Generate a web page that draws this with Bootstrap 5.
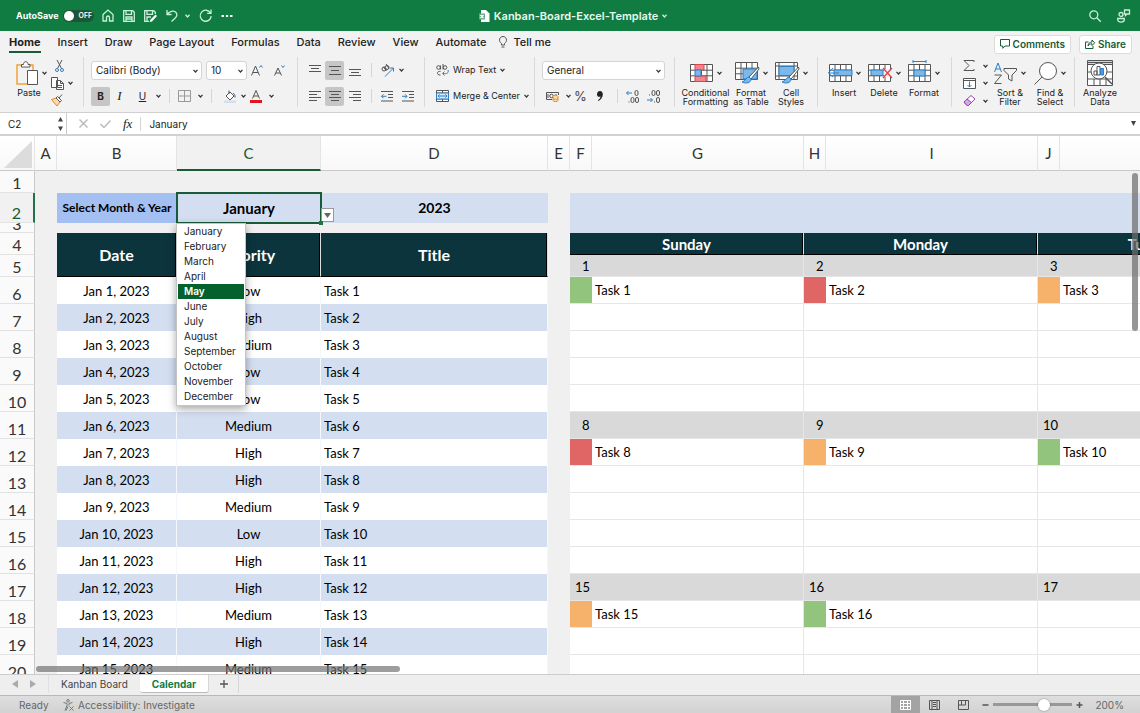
<!DOCTYPE html>
<html lang="en">
<head>
<meta charset="utf-8">
<meta name="viewport" content="width=device-width, initial-scale=1">
<title>Kanban-Board-Excel-Template</title>
<link href="https://cdn.jsdelivr.net/npm/bootstrap@5.3.0/dist/css/bootstrap.min.css" rel="stylesheet">
<style>
  :root { --xl-green: #107c41; --xl-dark: #0c343d; --xl-band: #d3def1; --xl-canvas: #f0f0f0; }
  body { font-family: Inter, "Liberation Sans", sans-serif; font-size: 9px; line-height: 10px; color: #222; background: #f2f2f2; }
  svg { display: block; flex: none; fill: none; stroke: #555; stroke-width: 1; overflow: visible; }
  button { font: inherit; color: inherit; }
  .plain { border: 0; padding: 0; background: none; display: flex; align-items: center; justify-content: center; gap: 4px; }
  .plain.wide { gap: 7px; }
  .chev { width: 5px; height: 4px; stroke: #333; stroke-width: 1.2; }

  .titlebar { height: 31px; background: var(--xl-green); color: #fff; padding: 0 10px 0 16px; }
  .titlebar svg { stroke: #c9f0d8; stroke-width: 1.3; }
  .titlebar svg.chev { stroke: #c9f0d8; }
  .side { flex: 1 1 0; }
  .quick { gap: 9px; }
  .autosave { background: #1d5635; border-radius: 6px; width: 31px; height: 12px; font-size: 7px; font-weight: 600; }
  .autosave input { appearance: none; width: 10px; height: 10px; border-radius: 5px; background: #fff; margin: 1px; }
  .doc-title { font-size: 11px; font-weight: 600; color: #e8f8ee; }

  .tabs-row { height: 26px; padding: 0 8px 0 9px; font-size: 11px; line-height: 14px; font-weight: 500; }
  .tabs-row nav { gap: 17px; }
  .tabs-row nav a { color: #222; text-decoration: none; padding: 0 0 2px; border-bottom: 2px solid transparent; }
  .tabs-row nav a.active { font-weight: 700; border-color: #185c37; }
  .tell { display: flex; align-items: center; gap: 6px; margin-left: -4px; }
  .pill { background: #fff; border: 1px solid #dcdcdc; border-radius: 3px; height: 19px; padding: 0 5px; gap: 3px; color: #185c37; font-size: 10px; font-weight: 600; }
  .pill svg { stroke: #185c37; }

  .ribbon { height: 56px; border-bottom: 1px solid #d0d0d0; overflow: hidden; }
  .group { height: 50px; padding: 3px 0 0 7px; display: flex; border-right: 1px solid #d9d9d9; flex: none; }
  .tool-row { height: 20px; display: flex; align-items: center; }
  .tool-row.tight { gap: 1px; }
  .rows { display: flex; flex-direction: column; gap: 6px; }
  .stack3 { height: 46px; display: flex; flex-direction: column; justify-content: space-between; align-items: flex-start; }
  .sq { width: 19px; height: 19px; border-radius: 2px; }
  .sq.on { background: #c6c6c6; }
  .split { width: 1px; height: 14px; background: #d5d5d5; }
  .tight .split { margin: 0 8px 0 6px; }
  .pick { position: relative; display: block; }
  .pick select { appearance: none; width: 100%; height: 19px; border: 1px solid #d4d4d4; border-radius: 3px; background: #fff; padding: 0 4px; font-size: 10px; line-height: 14px; color: #222; display: block; }
  .pick svg { position: absolute; right: 4px; top: 8px; }
  .big { width: 36px; flex-direction: column; gap: 2px; white-space: nowrap; justify-content: flex-start; line-height: 9px; }
  .big .art { height: 26px; display: flex; align-items: center; gap: 4px; }
  .serif-i { font: italic 13px "Liberation Serif", serif; }

  .formula { height: 23px; background: #fff; border-bottom: 2px solid #d2d2d2; }
  .formula input { border: 0; background: none; font-size: 10px; color: #222; padding: 0; line-height: 14px; outline: 0; }
  .namebox { width: 67px; padding: 0 3px 0 8px; border-right: 1px solid #ccc; }

  .sheet { background: #fff; font-family: Lato, "Noto Sans", sans-serif; font-size: 13px; line-height: 16px; color: #000; }
  .sheet table { table-layout: fixed; width: 1273px; border-collapse: separate; border-spacing: 0; }
  .sheet th, .sheet td { padding: 0; overflow: hidden; white-space: nowrap; }
  .cols th { height: 35px; font-size: 15px; font-weight: 400; text-align: center; color: #333; border-right: 1px solid #e4e4e4; border-bottom: 1px solid #c9c9c9; background: linear-gradient(#fff, #f8f8f8); }
  .cols th.sel { background: #f1f1f1; color: #185c37; border-bottom: 2px solid #185c37; }
  .num { font-size: 16px; font-weight: 400; text-align: center; vertical-align: bottom; line-height: 18px; color: #333; background: #fafafa; border-right: 1px solid #c9c9c9; border-bottom: 1px solid #e2e2e2; }
  .num.sel { color: #185c37; background: #f1f1f1; border-right: 2px solid #217346; }
  .num div { height: 7px; display: flex; align-items: flex-end; justify-content: center; overflow: hidden; margin-bottom: 2px; line-height: 12px; }
  .canvas-bg { background: var(--xl-canvas); }
  .pale { background: var(--xl-band); }
  .sheet td.month { overflow: visible; position: relative; outline: 2px solid #185c37; outline-offset: -1px; z-index: 2; }
  .input-head { font-size: 14px; font-weight: 700; text-align: center; }
  .month { font-size: 15px; }
  .label-cell { background: #a4bff2; font-size: 12px; font-weight: 700; text-align: center; }
  .dark { background: var(--xl-dark); color: #fff; font-weight: 700; text-align: center; border-right: 1px solid #ddd; border-bottom: 1px solid #000; box-shadow: inset -1px 0 #000; }
  .dark.tall { font-size: 16px; }
  .dark.day { font-size: 15px; }
  .lst { text-align: center; border-right: 1px solid #f4f7fc; }
  .sheet td.task { text-align: left; padding-left: 3px; }
  .cal { border-bottom: 1px solid #e6e6e6; }
  .cal.edge { border-right: 1px solid #e6e6e6; }
  .sheet td.cal.txt { padding-left: 3px; }
  .date-row { background: #d9d9d9; }
  .sheet td.date-row.n { padding-left: 5px; }
  .sheet td.date-row.one { padding-left: 12px; }
  .green { background: #93c47d; } .red { background: #e06666; } .orange { background: #f6b26b; }
  .arrow-btn { position: absolute; left: 144px; bottom: 1px; width: 13px; height: 14px; background: #fff; border: 1px solid #999; padding: 0; }
  .handle { position: absolute; right: -2px; bottom: -2px; width: 4px; height: 4px; background: #217346; }
  .months { position: absolute; left: -1px; top: 30px; width: 70px; padding: 0 1px 1px; margin: 0; list-style: none; background: #fff; border: 1px solid #c4c4c4; box-shadow: 0 3px 8px rgba(0,0,0,.35); font: 400 10px/15px Inter, sans-serif; text-align: left; }
  .months button { border: 0; background: none; width: 100%; text-align: left; padding: 0 0 0 6px; display: block; color: #222; }
  .months button.on { background: #05612b; color: #fff; font-weight: 600; }
  .hbar { position: absolute; left: 36px; bottom: 2px; width: 364px; height: 6px; border-radius: 3px; background: rgba(110,110,110,.68); z-index: 4; }
  .vbar { position: absolute; right: 2px; top: 37px; width: 6px; height: 158px; border-radius: 3px; background: rgba(110,110,110,.72); z-index: 4; }

  .sheet-tabs { height: 21px; background: #eee; border-top: 1px solid #ccc; font-size: 10px; color: #444; }
  .sheet-tabs .tab-btn { height: 18px; padding: 0 12px; border-right: 1px solid #d6d6d6; }
  .sheet-tabs .tab-btn.on { background: #fff; color: #107c41; font-weight: 700; border-bottom: 1px solid #bbb; border-radius: 0 0 3px 3px; }
  .pager { width: 49px; height: 18px; gap: 12px; }
  .status { height: 18px; background: linear-gradient(#dedede, #d2d2d2); border-top: 1px solid #b9b9b9; font-size: 10px; color: #666; }
  .ready { width: 63px; padding-left: 19px; }
  .view { width: 29px; height: 18px; }
  .view.on { background: #a3a3a3; }
  .zoom { appearance: none; width: 79px; height: 12px; margin: 0; background: linear-gradient(#989898, #989898) center / 100% 3px no-repeat; }
  .zoom::-webkit-slider-thumb { appearance: none; width: 12px; height: 12px; border-radius: 6px; background: #fff; box-shadow: 0 0 2px rgba(0,0,0,.4); }
</style>
</head>
<body>
<svg width="0" height="0" class="position-absolute">
  <symbol id="chev" viewBox="0 0 5 4"><path d="M.5 .8 2.500 3 4.500 .8"/></symbol>
  <symbol id="grid" viewBox="0 0 23 18"><path fill="#fff" d="M.5.5h22v17H.5z"/><path d="M.5 6.200h22M.5 11.800h22M6 .5v17M11.500.5v17M17 .5v17"/></symbol>
</svg>
<div class="d-flex flex-column vh-100 overflow-hidden">

<header class="titlebar d-flex align-items-center flex-shrink-0">
  <div class="side d-flex align-items-center">
    <label for="autosave" class="fw-bold me-1">AutoSave</label>
    <div class="autosave d-flex align-items-center me-2"><input type="checkbox" id="autosave" role="switch"><span class="ms-1">OFF</span></div>
    <div class="quick d-flex align-items-center">
      <button class="plain" aria-label="Home"><svg width="12" height="13" viewBox="0 0 12 13"><path d="M1 5.500 6 1l5 4.500V12H7.500V8.500A1.500 1.500 0 0 0 4.500 8.500V12H1z"/></svg></button>
      <button class="plain" aria-label="Save"><svg width="12" height="12" viewBox="0 0 12 12"><path d="M.7.7h9l1.600 1.600v9H.7zM3 .7v3.600h5.500V.7M3 11.300V7h6v4.300M3 9h6"/></svg></button>
      <button class="plain" aria-label="Save as"><svg width="13" height="12" viewBox="0 0 13 12"><path d="M5 11.300H.7V.7h9l1.600 1.600V4M3 .7v3.600h5.500V.7M3 11V7h4"/><path fill="#fff" stroke="none" d="m11.500 4.500 1.500 1.500-5 5.500-2.300.5.600-2.200z"/></svg></button>
      <button class="plain wide" aria-label="Undo"><svg width="12" height="13" viewBox="0 0 12 13"><path d="M1 1v4.500h4.500M1 5.500C3 3 5 2 7.500 2.200c3.500.5 4.500 4 2 6.500L5.500 12.500"/></svg><svg class="chev"><use href="#chev"/></svg></button>
      <button class="plain" aria-label="Redo"><svg width="13" height="13" viewBox="0 0 13 13"><path d="M11.500 4A5.500 5.500 0 1 0 12.200 7M12 .5V4.300H8.200"/></svg></button>
      <button class="plain" aria-label="More"><svg width="12" height="4" viewBox="0 0 12 4"><path fill="#fff" stroke="none" d="M.5 1h2.500v2H.5zM4.800 1h2.400v2H4.800zM9 1h2.500v2H9z"/></svg></button>
    </div>
  </div>
  <div class="doc-title d-flex align-items-center gap-1">
    <svg width="11" height="12" viewBox="0 0 11 12"><path fill="#fff" stroke="none" d="M2 0h5l3.500 3.500V12H2z"/><path fill="#69aa85" stroke="none" d="M0 3.500h6v6H0z"/><path stroke="#fff" d="m1.500 5 3 3m0-3-3 3M8 5v4"/></svg>
    <span>Kanban-Board-Excel-Template</span><svg class="chev"><use href="#chev"/></svg>
  </div>
  <div class="side d-flex align-items-center justify-content-end gap-3">
    <button class="plain" aria-label="Search"><svg width="12" height="12" viewBox="0 0 12 12"><circle cx="4.800" cy="4.800" r="4"/><path d="m7.800 7.800 4 4"/></svg></button>
    <button class="plain" aria-label="Presence"><svg width="13" height="14" viewBox="0 0 13 14"><circle cx="4" cy="5.500" r="2"/><path d="M.7 9.500h6.600v1.300c0 3-6.600 3-6.600 0zM7.500 1h5v4H10L8.500 6.500V5h-1z"/></svg></button>
  </div>
</header>

<div class="tabs-row d-flex align-items-center flex-shrink-0">
  <nav class="d-flex align-items-center">
    <a href="#" class="active">Home</a><a href="#">Insert</a><a href="#">Draw</a><a href="#">Page Layout</a><a href="#">Formulas</a><a href="#">Data</a><a href="#">Review</a><a href="#">View</a><a href="#">Automate</a>
    <a href="#" class="tell"><svg width="8" height="12" viewBox="0 0 8 12"><path d="M2.500 9V7.500C-1 5 .5.5 4 .5S9 5 5.500 7.500V9zM2.500 11h3"/></svg>Tell me</a>
  </nav>
  <div class="ms-auto d-flex gap-2">
    <button class="plain pill"><svg width="10" height="10" viewBox="0 0 10 10"><path d="M.5.5h9v6.500H5L2.800 9.300V7H.5z"/></svg>Comments</button>
    <button class="plain pill"><svg width="10" height="10" viewBox="0 0 10 10"><path d="M3.500 3H.5v6.500h7.500V7M3 7c.3-3 2-4 4-4V1l2.700 2.800L7 6.500V4.800C5 4.800 4 5.500 3 7z"/></svg>Share</button>
  </div>
</div>

<div class="ribbon d-flex flex-shrink-0">
  <div class="group" style="width:84px">
    <button class="plain big ms-1"><span class="art ms-1"><svg width="22" height="25" viewBox="0 0 22 25"><path stroke="#f0a23e" stroke-width="1.500" d="M6 4H1v19h10M14 4h3v5"/><path fill="#fff" d="M5.500 6V3.500h2C7.500-.3 12-.3 12 3.500h2V6z"/><path fill="#fff" d="M11.500 9.500h10v14h-10z"/></svg><svg class="chev"><use href="#chev"/></svg></span>Paste</button>
    <div class="stack3 ms-1">
      <button class="plain px-1" aria-label="Cut"><svg width="9" height="12" viewBox="0 0 9 12"><path d="M2 0l4.500 8.500M7 0 2.500 8.500"/><g stroke="#2e7fc4"><circle cx="2" cy="10" r="1.500"/><circle cx="7" cy="10" r="1.500"/></g></svg></button>
      <button class="plain" aria-label="Copy"><svg width="13" height="13" viewBox="0 0 13 13"><path fill="#fff" d="M.5.5h6v10h-6zM5.500 3.500h4l3 3v6h-7zM9.500 3.500v3h3M7 8.500h4M7 10.500h4"/></svg><svg class="chev"><use href="#chev"/></svg></button>
      <button class="plain" aria-label="Format painter"><svg width="12" height="12" viewBox="0 0 12 12"><path stroke="#e08a2e" fill="#fbd9a8" d="M.5 5.500 5 4l4 4-3 4z"/><path fill="#fff" d="m5 4 1.500-1.500 4 4L9 8zM8 4l3-3.500"/></svg></button>
    </div>
  </div>
  <div class="group" style="width:214px">
    <div class="rows">
      <div class="tool-row">
        <label class="pick" style="width:111px"><select aria-label="Font"><option>Calibri (Body)</option></select><svg class="chev"><use href="#chev"/></svg></label>
        <label class="pick ms-1" style="width:41px"><select aria-label="Font size"><option>10</option></select><svg class="chev"><use href="#chev"/></svg></label>
        <button class="plain sq" aria-label="Increase font"><svg width="12" height="11" viewBox="0 0 12 11"><path d="M.5 10.500 4.500 1l4 9.500M2 7.500h5"/><path stroke="#2e7fc4" d="m8.500 2.500 1.500-2 1.500 2"/></svg></button>
        <button class="plain sq ms-1" aria-label="Decrease font"><svg width="11" height="11" viewBox="0 0 11 11"><path d="M.5 10.500 4 3l3.500 7.500M2 8h4"/><path stroke="#2e7fc4" d="m7.500.5 1.500 2 1.500-2"/></svg></button>
      </div>
      <div class="tool-row">
        <button class="plain sq on fw-bold" style="font-size:10px">B</button>
        <button class="plain sq serif-i">I</button>
        <button class="plain sq ms-1 text-decoration-underline" style="font-size:10px">U</button>
        <svg class="chev ms-1"><use href="#chev"/></svg><span class="split mx-2"></span>
        <button class="plain wide" aria-label="Borders"><svg width="13" height="12" viewBox="0 0 13 12" style="stroke:#999"><path d="M.5.500h12v11H.5zM6.500.5v11M.5 6h12"/></svg><svg class="chev"><use href="#chev"/></svg></button>
        <span class="split mx-2"></span>
        <button class="plain ms-1" aria-label="Fill"><svg width="13" height="13" viewBox="0 0 13 13"><path fill="#fff" d="m2 6 4-4 4 4-4 4zM5 4V.5"/><path stroke="#2e5fa4" d="M9 3.500c1.500 0 2 1 2 4"/><path fill="#d3def1" stroke="none" d="M0 10.500h12V13H0z"/></svg><svg class="chev"><use href="#chev"/></svg></button>
        <button class="plain wide ms-1" aria-label="Font colour"><svg width="12" height="13" viewBox="0 0 12 13"><path d="M2.500 8.500 6 .5l3.500 8M3.500 6h5"/><path fill="#e3141b" stroke="none" d="M0 10h12v3H0z"/></svg><svg class="chev"><use href="#chev"/></svg></button>
      </div>
    </div>
  </div>
  <div class="group" style="width:127px">
    <div class="rows">
      <div class="tool-row tight">
        <button class="plain sq" aria-label="Top"><svg width="12" height="11" viewBox="0 0 12 11"><path d="M0 .5h12M2 3.500h8M0 6.500h12"/></svg></button>
        <button class="plain sq on" aria-label="Middle"><svg width="12" height="9" viewBox="0 0 12 9"><path d="M0 .5h12M2 4.500h8M0 8.500h12"/></svg></button>
        <button class="plain sq" aria-label="Bottom"><svg width="12" height="5" viewBox="0 0 12 5"><path d="M0 1.500h12M2 4.500h8M0 7.500h12"/></svg></button>
        <span class="split"></span>
        <button class="plain" aria-label="Orientation"><svg width="14" height="13" viewBox="0 0 14 13"><circle cx="3" cy="5" r="2"/><circle cx="6" cy="3.500" r="2"/><path d="m2.500 3 3 4M5 0l3 4.500"/><path stroke="#2e7fc4" d="M4 12.500 12.500 4M9 4h3.500v3.500"/></svg><svg class="chev"><use href="#chev"/></svg></button>
      </div>
      <div class="tool-row tight">
        <button class="plain sq" aria-label="Left"><svg width="12" height="11" viewBox="0 0 12 11"><path d="M0 .5h12M0 3.500h8M0 6.500h12M0 9.500h8"/></svg></button>
        <button class="plain sq on" aria-label="Center"><svg width="12" height="11" viewBox="0 0 12 11"><path d="M0 .5h12M2 3.500h8M0 6.500h12M2 9.500h8"/></svg></button>
        <button class="plain sq" aria-label="Right"><svg width="12" height="11" viewBox="0 0 12 11"><path d="M0 .5h12M4 3.500h8M0 6.500h12M4 9.500h8"/></svg></button>
        <span class="split"></span>
        <button class="plain" aria-label="Outdent"><svg width="12" height="11" viewBox="0 0 12 11"><path d="M0 .5h12M7 3.500h5M7 6.500h5M0 10h12"/><path stroke="#2e7fc4" d="M5.500 5.300H.5M2.500 3.300l-2 2 2 2"/></svg></button>
        <button class="plain ms-2" aria-label="Indent"><svg width="12" height="11" viewBox="0 0 12 11"><path d="M0 .5h12M7 3.500h5M7 6.500h5M0 10h12"/><path stroke="#2e7fc4" d="M0 5.300h5M3 3.300l2 2-2 2"/></svg></button>
      </div>
    </div>
  </div>
  <div class="group" style="width:110px">
    <div class="rows ps-1">
      <div class="tool-row"><button class="plain"><svg width="13" height="12" viewBox="0 0 13 12"><circle cx="2.500" cy="3.500" r="1.800"/><path d="M4.500 1.500v4M7 0v5.500"/><circle cx="9" cy="3.500" r="1.800"/><path d="M4.500 7.500c-4-1-4 4 0 3.500"/><path stroke="#2e7fc4" d="M12 6c1 3-1 4-5 3.500M8.500 7.500l-2 2 2 2"/></svg><span>Wrap Text</span><svg class="chev"><use href="#chev"/></svg></button></div>
      <div class="tool-row"><button class="plain"><svg width="13" height="12" viewBox="0 0 13 12"><path fill="#fff" d="M.5.5h12v11H.5zM.5 3h12M.5 9h12M6.500.5V3M6.500 9v2.500"/><path fill="#d7eafa" stroke="#2e7fc4" d="M.5 3h12v6H.5zM2 6h9M3.500 4.500 2 6l1.500 1.500M9.500 4.500 11 6 9.500 7.500"/></svg><span>Merge &amp; Center</span><svg class="chev"><use href="#chev"/></svg></button></div>
    </div>
  </div>
  <div class="group" style="width:140px">
    <div class="rows">
      <div class="tool-row"><label class="pick" style="width:123px"><select aria-label="Number format"><option>General</option></select><svg class="chev"><use href="#chev"/></svg></label></div>
      <div class="tool-row">
        <button class="plain wide ms-1" aria-label="Currency"><svg width="13" height="11" viewBox="0 0 13 11"><path d="M6 8.500H.5v-7h12V4"/><circle cx="5.500" cy="5" r="1.800"/><path d="M2 3v4M10 3v1"/><path fill="#fbd9a8" stroke="#e08a2e" d="M7 5.500c0-1.500 5-1.500 5 0v4c0 1.500-5 1.500-5 0zM7 7.500c0 1 5 1 5 0"/></svg><svg class="chev"><use href="#chev"/></svg></button>
        <button class="plain sq" style="font-size:13px;color:#444">%</button>
        <button class="plain sq" aria-label="Comma"><svg width="6" height="10" viewBox="0 0 6 10"><path fill="#222" stroke="none" d="M3 0c4 0 4 7-1.500 10L1 9.200C2.500 8 3.500 7 3.500 5.500 1 6.500 0 5 0 3.200S1 0 3 0z"/></svg></button>
        <span class="split mx-2"></span>
        <button class="plain" aria-label="Increase decimal"><svg width="13" height="13" viewBox="0 0 13 13"><path stroke="#2e7fc4" d="M6 3H.5M2.500 1l-2 2 2 2"/><rect x="9" y=".5" width="3" height="5" rx="1.500"/><rect x="5" y="7.500" width="3" height="5" rx="1.500"/><rect x="9.500" y="7.500" width="3" height="5" rx="1.500"/><path d="M2.500 12h1"/></svg></button>
        <button class="plain ms-2" aria-label="Decrease decimal"><svg width="13" height="13" viewBox="0 0 13 13"><path stroke="#2e7fc4" d="M0 10h5.500M3.500 8l2 2-2 2"/><rect x="5" y=".5" width="3" height="5" rx="1.500"/><rect x="9.500" y=".5" width="3" height="5" rx="1.500"/><rect x="9.500" y="7.500" width="3" height="5" rx="1.500"/><path d="M2 5h1M7 12h1"/></svg></button>
      </div>
    </div>
  </div>
  <div class="group gap-1" style="width:143px">
    <button class="plain big" style="width:47px"><span class="art"><svg width="23" height="18"><use href="#grid"/><path fill="#f4858b" stroke="#e0434c" d="M5 .5h9v5.500H5zM5 12h11v5.500H5z"/><path fill="#7db8ea" stroke="#2e7fc4" d="M5 6h6v6H5z"/></svg><svg class="chev"><use href="#chev"/></svg></span>Conditional<br>Formatting</button>
    <button class="plain big"><span class="art"><svg width="24" height="22" viewBox="0 0 24 22"><use href="#grid" width="23" height="18"/><path fill="#7db8ea" stroke="#2e7fc4" d="M8 7h14v10H8z"/><path fill="#fff" d="M23.500 5 14 15l2 2L24 7z"/><path fill="#7db8ea" stroke="#2e7fc4" d="M14 15c-3 0-3 4-7 5 4 2 9 1 9-3z"/></svg><svg class="chev"><use href="#chev"/></svg></span>Format<br>as Table</button>
    <button class="plain big"><span class="art"><svg width="24" height="22" viewBox="0 0 24 22"><path fill="#fff" d="M.5.5h22v17H.5zM.5 4h22M4 .5v17M19 .5v17M.5 14h22"/><path fill="#7db8ea" stroke="#2e7fc4" d="M4 4.500h15v9H4z"/><path fill="#fff" d="M23.500 5 14 15l2 2L24 7z"/><path fill="#7db8ea" stroke="#2e7fc4" d="M14 15c-3 0-3 4-7 5 4 2 9 1 9-3z"/></svg><svg class="chev"><use href="#chev"/></svg></span>Cell<br>Styles</button>
  </div>
  <div class="group gap-1 ps-2" style="width:134px">
    <button class="plain big"><span class="art"><svg width="24" height="18" viewBox="0 0 24 18"><use href="#grid" x="1" width="23" height="18"/><path fill="#7db8ea" stroke="#2e7fc4" d="M6 6h18v5.500H6z"/><path stroke="#2e7fc4" d="M11 9H.5M5 4 .5 9 5 13"/></svg><svg class="chev"><use href="#chev"/></svg></span>Insert</button>
    <button class="plain big"><span class="art"><svg width="24" height="18" viewBox="0 0 24 18"><use href="#grid" width="23" height="18"/><path fill="#f2f2f2" stroke="none" d="M16 5h8v8h-8z"/><path fill="#7db8ea" stroke="#2e7fc4" d="M3 6h12v5.500H3z"/><path stroke="#e0434c" stroke-width="1.300" d="m15 4 9 10M24 4l-9 10"/></svg><svg class="chev"><use href="#chev"/></svg></span>Delete</button>
    <button class="plain big"><span class="art"><svg width="23" height="26" viewBox="0 0 23 26"><use href="#grid" y="4" width="23" height="18"/><path fill="#7db8ea" stroke="#2e7fc4" d="M6 10h11v6H6z"/><path stroke="#2e7fc4" d="M5 1.500h13M5 0v3M18 0v3"/></svg><svg class="chev"><use href="#chev"/></svg></span>Format</button>
  </div>
  <div class="group gap-1" style="width:123px">
    <div class="stack3 ps-1">
      <button class="plain wide" aria-label="AutoSum"><svg width="13" height="11" viewBox="0 0 13 11"><path d="M11 2V.5H1L6 5.500l-5 5h10V9"/></svg><svg class="chev"><use href="#chev"/></svg></button>
      <button class="plain wide" aria-label="Fill"><svg width="13" height="11" viewBox="0 0 13 11"><path fill="#fff" d="M.5.5h12v10H.5zM.5 2.500h12"/><path stroke="#2e7fc4" d="M6.500 3.500V9M4.500 7l2 2 2-2"/></svg><svg class="chev"><use href="#chev"/></svg></button>
      <button class="plain wide" aria-label="Clear"><svg width="13" height="11" viewBox="0 0 13 11"><path stroke="#9b3fb5" fill="#fff" d="M1 7 8 .5 12 4 5.500 10.500H4z"/><path stroke="#9b3fb5" fill="#d9a5e6" d="M1 7 4 4l4.500 3.500-3 3H4z"/></svg><svg class="chev"><use href="#chev"/></svg></button>
    </div>
    <button class="plain big"><span class="art"><svg width="23" height="21" viewBox="0 0 23 21"><path stroke="#2e7fc4" d="M.5 9 4 0l3.500 9M1.500 6h5"/><path d="M.5 12h7l-7 8.500h7M10 5.500h12.500v2L18 12v6l-3.500-2v-4L10 7.500z"/></svg><svg class="chev"><use href="#chev"/></svg></span>Sort &amp;<br>Filter</button>
    <button class="plain big"><span class="art"><svg width="23" height="23" viewBox="0 0 23 23"><circle fill="#fff" cx="14" cy="9" r="8.500"/><path d="M8 15 .5 22.500"/></svg><svg class="chev"><use href="#chev"/></svg></span>Find &amp;<br>Select</button>
  </div>
  <div class="group border-0">
    <button class="plain big"><span class="art"><svg width="26" height="26" viewBox="0 0 26 26"><path fill="#fff" d="M.5.5h25v25H.5zM.5 4.500h25M.5 12h25M.5 19h25M7 19v6M13 19v6M19 19v6"/><path stroke-width="1.500" d="M.5 2.500h25"/><circle fill="#fff" cx="12" cy="11" r="8"/><path stroke-width="1.500" d="m18 17 7 7"/><path fill="#fff" d="M7 11h3v4H7zM10 6.500h3V15h-3z"/><path fill="#4a9be0" stroke="#2e7fc4" d="M13.500 8.500h3V15h-3z"/></svg></span>Analyze<br>Data</button>
  </div>
</div>

<div class="formula d-flex align-items-center flex-shrink-0">
  <div class="namebox d-flex align-items-center h-100"><input class="w-100" style="min-width:0" aria-label="Name box" value="C2"><svg width="5" height="14" viewBox="0 0 5 14"><path fill="#444" stroke="none" d="M2.500 0 5 4.500H0zM2.500 14 0 9.500h5z"/></svg></div>
  <button class="plain ms-2 px-1" aria-label="Cancel"><svg width="9" height="9" viewBox="0 0 9 9" style="stroke:#bbb;stroke-width:1.500"><path d="m.5.5 8 8M8.500.5l-8 8"/></svg></button>
  <button class="plain px-2" aria-label="Enter"><svg width="11" height="8" viewBox="0 0 11 8" style="stroke:#bbb;stroke-width:1.500"><path d="m.5 4 3.500 3.500L10.500.5"/></svg></button>
  <button class="plain serif-i ms-1" aria-label="Insert function">fx</button>
  <span class="split mx-2"></span>
  <input class="flex-grow-1" aria-label="Formula" value="January">
  <svg class="me-1" width="5" height="5" viewBox="0 0 5 5"><path fill="#444" stroke="none" d="M0 0h5L2.500 5z"/></svg>
</div>

<main class="sheet position-relative flex-grow-1 overflow-hidden">
  <table>
    <colgroup>
      <col style="width:35px"><col style="width:22px"><col style="width:120px"><col style="width:144px"><col style="width:227px"><col style="width:22px">
      <col style="width:22px"><col style="width:212px"><col style="width:22px"><col style="width:212px"><col style="width:22px"><col style="width:213px">
    </colgroup>
    <thead>
      <tr class="cols"><th><svg width="30" height="31" viewBox="0 0 30 31" class="ms-1"><path fill="#dcdcdc" stroke="none" d="M28 3v27H0z"/></svg></th><th>A</th><th>B</th><th class="sel">C</th><th>D</th><th>E</th><th>F</th><th>G</th><th>H</th><th>I</th><th>J</th><th></th></tr>
    </thead>
    <tbody id="cells">
      <tr style="height:22px"><th class="num">1</th><td class="canvas-bg" colspan="11"></td></tr>
      <tr style="height:30px"><th class="num sel">2</th><td class="canvas-bg"></td><td class="label-cell">Select Month &amp; Year</td>
        <td class="pale input-head month">January
          <button class="arrow-btn" aria-label="Choose month"><svg width="11" height="12" viewBox="0 0 11 12"><path fill="#666" stroke="none" d="M2 4h7L5.500 9z"/></svg></button><span class="handle"></span>
          <ul class="months"><li><button>January</button></li><li><button>February</button></li><li><button>March</button></li><li><button>April</button></li><li><button class="on">May</button></li><li><button>June</button></li><li><button>July</button></li><li><button>August</button></li><li><button>September</button></li><li><button>October</button></li><li><button>November</button></li><li><button>December</button></li></ul>
        </td>
        <td class="pale input-head">2023</td><td class="canvas-bg"></td><td class="pale" colspan="6" rowspan="2"></td></tr>
      <tr style="height:10px"><th class="num"><div>3</div></th><td class="canvas-bg" colspan="5"></td></tr>
      <tr style="height:22px"><th class="num">4</th><td class="canvas-bg"></td><td rowspan="2" class="dark tall">Date</td><td rowspan="2" class="dark tall">Priority</td><td rowspan="2" class="dark tall">Title</td><td class="canvas-bg"></td><td colspan="2" class="dark day">Sunday</td><td colspan="2" class="dark day">Monday</td><td colspan="2" class="dark day">Tuesday</td></tr>
      <tr style="height:22px"><th class="num">5</th><td class="canvas-bg"></td><td class="canvas-bg"></td><td colspan="2" class="cal edge date-row one">1</td><td colspan="2" class="cal edge date-row one">2</td><td colspan="2" class="cal date-row one">3</td></tr>
    </tbody>
  </table>
  <div class="hbar"></div><div class="vbar"></div>
</main>

<div class="sheet-tabs d-flex flex-shrink-0">
  <div class="pager d-flex align-items-center border-end ps-2"><svg width="6" height="8" viewBox="0 0 6 8" class="ms-1"><path fill="#aaa" stroke="none" d="M6 0v8L0 4z"/></svg><svg width="6" height="8" viewBox="0 0 6 8"><path fill="#aaa" stroke="none" d="M0 0v8l6-4z"/></svg></div>
  <button class="plain tab-btn border-0">Kanban Board</button>
  <button class="plain tab-btn on">Calendar</button>
  <button class="plain tab-btn px-2" style="width:30px" aria-label="Add sheet"><svg width="8" height="8" viewBox="0 0 8 8"><path stroke-width="1.300" d="M4 0v8M0 4h8"/></svg></button>
</div>

<footer class="status d-flex align-items-center flex-shrink-0">
  <span class="ready flex-shrink-0">Ready</span>
  <button class="plain"><svg width="11" height="12" viewBox="0 0 11 12" style="stroke:#777"><circle cx="5" cy="1.800" r="1.300"/><path d="M.5 3.500 4 4.500v2L2 11.500M9.500 3.500 6 4.500v2M3 11.500 5 7.500M6.500 7.500l4 4M10.500 7.500l-4 4"/></svg>Accessibility: Investigate</button>
  <div class="ms-auto d-flex align-items-center me-3">
    <button class="plain view on" aria-label="Normal view"><svg width="11" height="10" viewBox="0 0 11 10" style="stroke:#fff"><path d="M.5.5h10v9H.5zM.5 3.500h10M.5 6.500h10M3.500.5v9M7.500.5v9"/></svg></button>
    <button class="plain view" aria-label="Page layout view"><svg width="11" height="10" viewBox="0 0 11 10"><path d="M.5.5h10v9H.5zM3 .5v9M8 .5v9M4 2.500h3M4 4.500h3M4 6.500h3"/></svg></button>
    <button class="plain view" aria-label="Page break view"><svg width="11" height="10" viewBox="0 0 11 10"><path d="M.5.5h10v9H.5zM3.500.5V5h4V.5M.5 5h3M7.500 5v0"/></svg></button>
    <button class="plain px-1" aria-label="Zoom out"><svg width="7" height="6" viewBox="0 0 6 6"><path stroke-width="1.500" d="M0 3h6"/></svg></button>
    <input type="range" class="zoom" aria-label="Zoom" min="0" max="100" value="66">
    <button class="plain mx-1" aria-label="Zoom in"><svg width="7" height="6" viewBox="0 0 6 6"><path stroke-width="1.500" d="M0 3h6M3 0v6"/></svg></button>
    <span class="ms-2">200%</span>
  </div>
</footer>
</div>

<script>
  const priorities = ["Low","High","Medium","Low","Low","Medium","High","High","Medium","Low","High","High","Medium","High","Medium"];
  // Calendar content by sheet row: week header rows and the tasks under them.
  const weeks = { 11: [8, 9, 10], 17: [15, 16, 17] };
  const tasks = {
    6:  [["green", "Task 1"], ["red", "Task 2"], ["orange", "Task 3"]],
    12: [["red", "Task 8"], ["orange", "Task 9"], ["green", "Task 10"]],
    18: [["orange", "Task 15"], ["green", "Task 16"], ["", ""]]
  };
  let html = "";
  priorities.forEach((p, i) => {
    const row = i + 6, band = i % 2 ? " pale" : "";
    html += `<tr style="height:27px"><th class="num">${row}</th><td class="canvas-bg"></td><td class="lst${band}">Jan ${i + 1}, 2023</td><td class="lst${band}">${p}</td><td class="lst task${band}">Task ${i + 1}</td><td class="canvas-bg"></td>`;
    if (weeks[row]) html += weeks[row].map(d => `<td colspan="2" class="cal edge date-row ${d < 10 ? "one" : "n"}">${d}</td>`).join("");
    else html += (tasks[row] || [["", ""], ["", ""], ["", ""]]).map(([c, t]) => `<td class="cal ${c}"></td><td class="cal edge txt">${t}</td>`).join("");
    html += "</tr>";
  });
  document.getElementById("cells").insertAdjacentHTML("beforeend", html);
</script>
<script src="https://cdn.jsdelivr.net/npm/bootstrap@5.3.0/dist/js/bootstrap.bundle.min.js"></script>
</body>
</html>
